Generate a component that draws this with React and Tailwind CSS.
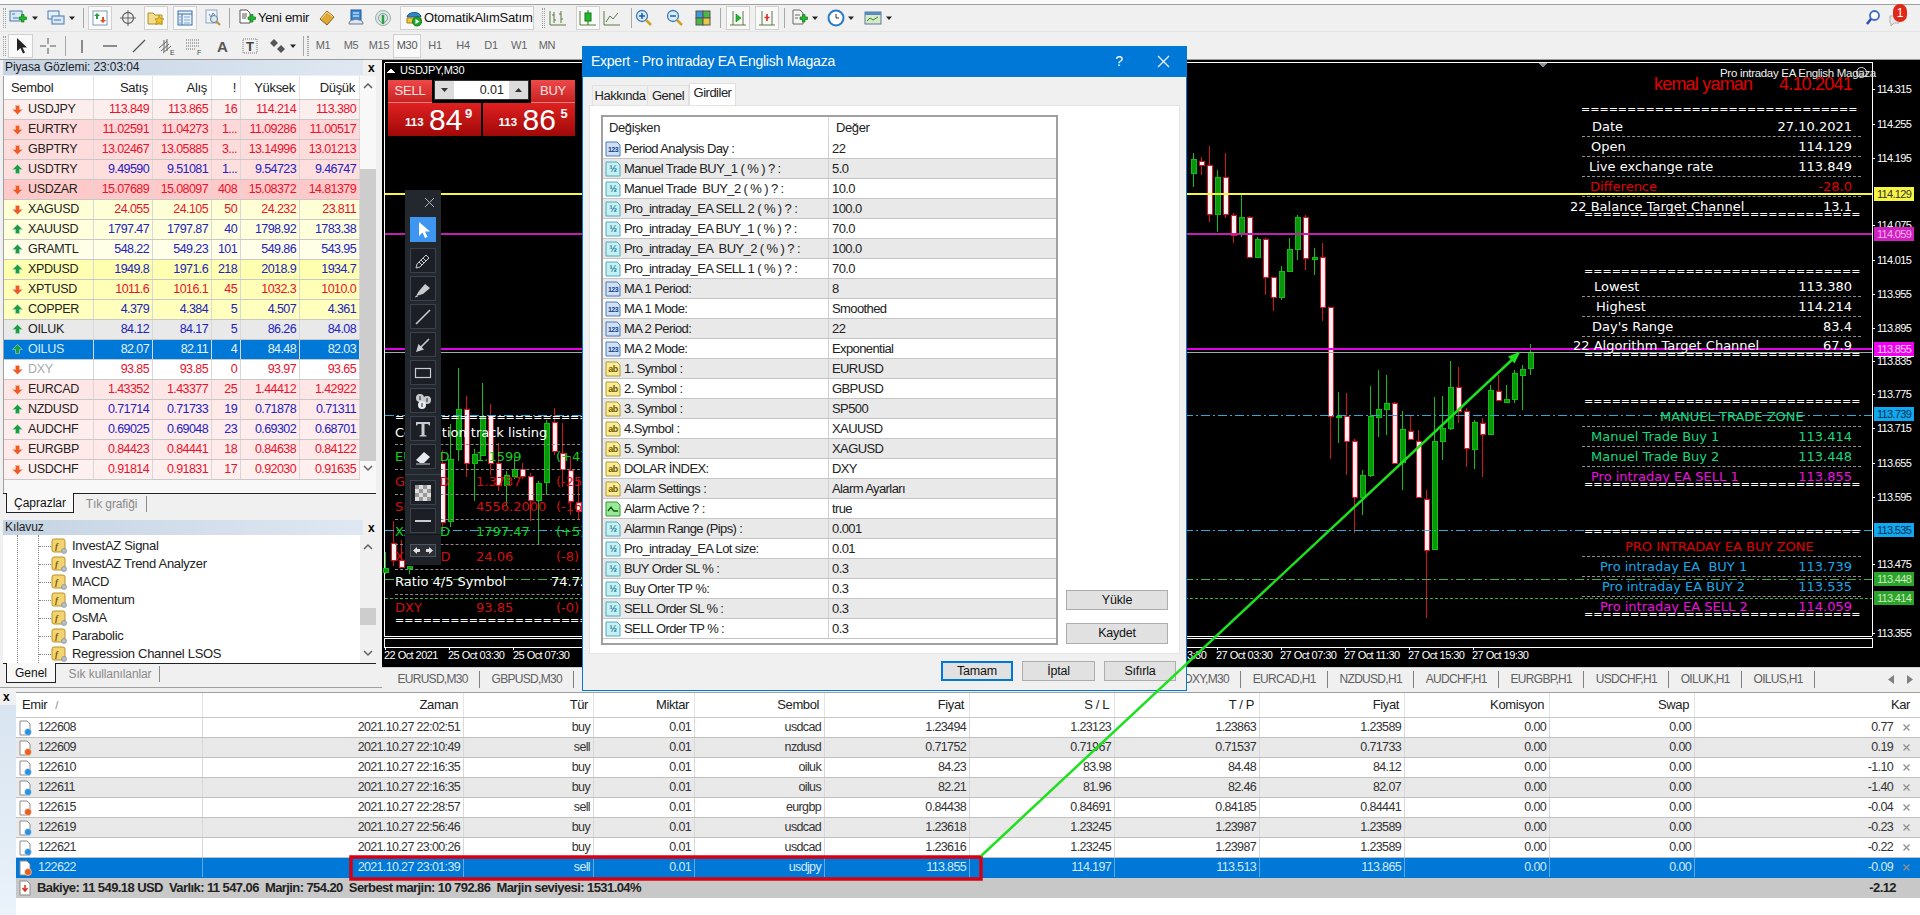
import React from 'react';

// ── data ──
const WATCH = [
  ['USDJPY', '113.849', '113.865', '16', '114.214', '113.380', 'd', 'bg-[#fdeeee]'],
  ['EURTRY', '11.02591', '11.04273', '1...', '11.09286', '11.00517', 'd', 'bg-[#ffd9d9]'],
  ['GBPTRY', '13.02467', '13.05885', '3...', '13.14996', '13.01213', 'd', 'bg-[#ffdcdc]'],
  ['USDTRY', '9.49590', '9.51081', '1...', '9.54723', '9.46747', 'u', 'bg-[#ffdede]'],
  ['USDZAR', '15.07689', '15.08097', '408', '15.08372', '14.81379', 'd', 'bg-[#ffc9c9]'],
  ['XAGUSD', '24.055', '24.105', '50', '24.232', '23.811', 'd', 'bg-[#ffffd6]'],
  ['XAUUSD', '1797.47', '1797.87', '40', '1798.92', '1783.38', 'u', 'bg-[#ffffdb]'],
  ['GRAMTL', '548.22', '549.23', '101', '549.86', '543.95', 'u', 'bg-[#ffffe8]'],
  ['XPDUSD', '1949.8', '1971.6', '218', '2018.9', '1934.7', 'u', 'bg-[#ffffb0]'],
  ['XPTUSD', '1011.6', '1016.1', '45', '1032.3', '1010.0', 'd', 'bg-[#ffffb8]'],
  ['COPPER', '4.379', '4.384', '5', '4.507', '4.361', 'u', 'bg-[#ffffbe]'],
  ['OILUK', '84.12', '84.17', '5', '86.26', '84.08', 'u', 'bg-[#e9e9e9]'],
  ['OILUS', '82.07', '82.11', '4', '84.48', '82.03', 'u', 'bg-[#0078d7]'],
  ['DXY', '93.85', '93.85', '0', '93.97', '93.65', 'd', 'bg-white'],
  ['EURCAD', '1.43352', '1.43377', '25', '1.44412', '1.42922', 'd', 'bg-[#ffe6e6]'],
  ['NZDUSD', '0.71714', '0.71733', '19', '0.71878', '0.71311', 'u', 'bg-[#ffe9e9]'],
  ['AUDCHF', '0.69025', '0.69048', '23', '0.69302', '0.68701', 'u', 'bg-[#ffecec]'],
  ['EURGBP', '0.84423', '0.84441', '18', '0.84638', '0.84122', 'd', 'bg-[#ffe9e9]'],
  ['USDCHF', '0.91814', '0.91831', '17', '0.92030', '0.91635', 'd', 'bg-[#fff0f0]'],
];

const GUIDE = ['InvestAZ Signal', 'InvestAZ Trend Analyzer', 'MACD', 'Momentum', 'OsMA', 'Parabolic', 'Regression Channel LSOS'];

const INPUTS = [
  ['n', 'Period Analysis Day :', '22'],
  ['d', 'Manuel Trade BUY_1 ( % ) ? :', '5.0'],
  ['d', 'Manuel Trade  BUY_2 ( % ) ? :', '10.0'],
  ['d', 'Pro_intraday_EA SELL 2 ( % ) ? :', '100.0'],
  ['d', 'Pro_intraday_EA BUY_1 ( % ) ? :', '70.0'],
  ['d', 'Pro_intraday_EA  BUY_2 ( % ) ? :', '100.0'],
  ['d', 'Pro_intraday_EA SELL 1 ( % ) ? :', '70.0'],
  ['n', 'MA 1 Period:', '8'],
  ['n', 'MA 1 Mode:', 'Smoothed'],
  ['n', 'MA 2 Period:', '22'],
  ['n', 'MA 2 Mode:', 'Exponential'],
  ['s', '1. Symbol :', 'EURUSD'],
  ['s', '2. Symbol :', 'GBPUSD'],
  ['s', '3. Symbol :', 'SP500'],
  ['s', '4.Symbol :', 'XAUUSD'],
  ['s', '5. Symbol:', 'XAGUSD'],
  ['s', 'DOLAR İNDEX:', 'DXY'],
  ['s', 'Alarm Settings :', 'Alarm Ayarları'],
  ['b', 'Alarm Active ? :', 'true'],
  ['d', 'Alarmın Range (Pips) :', '0.001'],
  ['d', 'Pro_intraday_EA Lot size:', '0.01'],
  ['d', 'BUY Order SL % :', '0.3'],
  ['d', 'Buy Orter TP %:', '0.3'],
  ['d', 'SELL Order SL % :', '0.3'],
  ['d', 'SELL Order TP % :', '0.3'],
];

const TRADES = [
  ['122608', '2021.10.27 22:02:51', 'buy', '0.01', 'usdcad', '1.23494', '1.23123', '1.23863', '1.23589', '0.00', '0.00', '0.77'],
  ['122609', '2021.10.27 22:10:49', 'sell', '0.01', 'nzdusd', '0.71752', '0.71967', '0.71537', '0.71733', '0.00', '0.00', '0.19'],
  ['122610', '2021.10.27 22:16:35', 'buy', '0.01', 'oiluk', '84.23', '83.98', '84.48', '84.12', '0.00', '0.00', '-1.10'],
  ['122611', '2021.10.27 22:16:35', 'buy', '0.01', 'oilus', '82.21', '81.96', '82.46', '82.07', '0.00', '0.00', '-1.40'],
  ['122615', '2021.10.27 22:28:57', 'sell', '0.01', 'eurgbp', '0.84438', '0.84691', '0.84185', '0.84441', '0.00', '0.00', '-0.04'],
  ['122619', '2021.10.27 22:56:46', 'buy', '0.01', 'usdcad', '1.23618', '1.23245', '1.23987', '1.23589', '0.00', '0.00', '-0.23'],
  ['122621', '2021.10.27 23:00:26', 'buy', '0.01', 'usdcad', '1.23616', '1.23245', '1.23987', '1.23589', '0.00', '0.00', '-0.22'],
  ['122622', '2021.10.27 23:01:39', 'sell', '0.01', 'usdjpy', '113.855', '114.197', '113.513', '113.865', '0.00', '0.00', '-0.09'],
];

// candles: [high, low, bodyTop, bodyBottom, up]
const RIGHT_CANDLES = [
  [153, 187, 159, 173, 1], [157, 175, 161, 165, 0], [146, 222, 165, 214, 0], [170, 232, 177, 214, 1],
  [153, 218, 177, 214, 0], [213, 243, 215, 235, 0], [194, 237, 217, 234, 1], [216, 257, 217, 257, 0],
  [237, 257, 239, 257, 1], [238, 295, 239, 277, 0], [277, 311, 277, 297, 0], [266, 300, 271, 297, 1],
  [238, 272, 249, 271, 1], [215, 260, 217, 249, 1], [215, 270, 217, 258, 0], [248, 275, 257, 259, 1],
  [243, 321, 257, 307, 0], [307, 459, 307, 416, 0], [392, 443, 416, 417, 1], [393, 475, 416, 441, 0],
  [439, 533, 441, 497, 0], [470, 515, 475, 497, 1], [386, 477, 416, 475, 1], [370, 437, 409, 417, 1],
  [375, 435, 403, 409, 1], [402, 463, 403, 463, 0], [411, 490, 429, 462, 1], [416, 440, 431, 439, 0],
  [430, 498, 441, 497, 0], [490, 618, 499, 550, 0], [397, 550, 441, 549, 1], [396, 460, 428, 441, 1],
  [361, 430, 387, 428, 1], [367, 423, 387, 411, 0], [408, 467, 411, 448, 0], [420, 469, 422, 449, 1],
  [418, 477, 423, 434, 0], [385, 435, 390, 434, 1], [375, 401, 391, 400, 0], [385, 403, 399, 402, 1],
  [370, 403, 373, 399, 1], [365, 410, 369, 375, 1], [344, 375, 352, 368, 1],
];

// x, high, low, bodyTop, bodyBottom, up
const LEFT_CANDLES = [
  [385, 552, 574, 568, 572, 1], [393, 521, 566, 543, 560, 0], [401, 540, 568, 560, 567, 0], [409, 566, 574, 566, 568, 1],
  [442, 450, 530, 463, 522, 0], [450, 424, 527, 459, 521, 1], [458, 368, 461, 409, 449, 1], [466, 396, 477, 409, 463, 0],
  [474, 449, 501, 454, 463, 1], [482, 383, 455, 416, 455, 1], [490, 404, 475, 416, 463, 0], [498, 443, 491, 463, 485, 0],
  [506, 471, 505, 475, 485, 1], [514, 457, 479, 469, 476, 1], [522, 463, 479, 469, 476, 0], [530, 473, 521, 476, 500, 0],
  [538, 481, 544, 483, 500, 1], [546, 420, 495, 423, 482, 1], [554, 408, 455, 422, 451, 0], [562, 423, 487, 453, 469, 0],
  [570, 457, 515, 470, 501, 0], [578, 479, 519, 502, 511, 0],
];

const AXIS = [
  ['114.315', 89], ['114.255', 124], ['114.195', 158], ['114.075', 225], ['114.015', 260], ['113.955', 294],
  ['113.895', 328], ['113.835', 361], ['113.775', 394], ['113.715', 428], ['113.655', 463], ['113.595', 497],
  ['113.475', 564], ['113.355', 633],
];

const TAGS = [
  ['114.129', 194, 'bg-[#f5f542] text-[#333]'],
  ['114.059', 234, 'bg-[#d020c0] text-[#f8b0f0]'],
  ['113.849', 350, 'bg-white text-black'],
  ['113.855', 349, 'bg-[#f000f0] text-[#fdd0fd]'],
  ['113.739', 414, 'bg-[#10a8f0] text-[#053050]'],
  ['113.535', 530, 'bg-[#10a8f0] text-[#053050]'],
  ['113.448', 579, 'bg-[#2aa52a] text-[#cfe8c0]'],
  ['113.414', 598, 'bg-[#2aa52a] text-[#cfe8c0]'],
];

const TIMES = [
  ['22 Oct 2021', 384], ['25 Oct 03:30', 448], ['25 Oct 07:30', 513], ['3:30', 1187],
  ['27 Oct 03:30', 1216], ['27 Oct 07:30', 1280], ['27 Oct 11:30', 1344], ['27 Oct 15:30', 1408], ['27 Oct 19:30', 1472],
];

const W = 'text-white';
const R = 'text-[#e00000]';
const P = 'text-[#f010e0]';
const T = 'text-[#18d880]';
const B = 'text-[#18a8e8]';
const PANEL = [
  ['Date', 1592, 127, '27.10.2021', W], ['Open', 1591, 147, '114.129', W], ['Live exchange rate', 1589, 167, '113.849', W],
  ['Difference', 1590, 187, '-28.0', R], ['22 Balance Target Channel', 1570, 207, '13.1', W],
  ['Lowest', 1594, 287, '113.380', W], ['Highest', 1596, 307, '114.214', W], ["Day's Range", 1592, 327, '83.4', W],
  ['22 Algorithm Target Channel', 1573, 346, '67.9', W],
  ['MANUEL TRADE ZONE', 1660, 417, '', T], ['Manuel Trade Buy 1', 1591, 437, '113.414', T], ['Manuel Trade Buy 2', 1591, 457, '113.448', T],
  ['Pro intraday EA SELL 1', 1591, 477, '113.855', P],
  ['PRO INTRADAY EA BUY ZONE', 1625, 547, '', R], ['Pro intraday EA  BUY 1', 1600, 567, '113.739', B],
  ['Pro intraday EA BUY 2', 1602, 587, '113.535', B], ['Pro intraday EA SELL 2', 1600, 607, '114.059', P],
];
const EQUALS_R = [[1581, 110], [1584, 215], [1584, 272], [1584, 355], [1584, 402], [1584, 485], [1584, 532], [1584, 615]];
const DASHES_R = [136, 156, 176, 196, 296, 316, 336, 426, 446, 466, 556, 576, 596];
const DASHES_L = [444, 469, 494, 519, 544, 569, 594];
const G = 'text-[#10d020]';
const D = 'text-[#d01010]';
const CORR = [
  ['Correlation track listing', 433, '', '', W], ['EURUSD', 457, '1.1599', '(+4)', G], ['GBPUSD', 482, '1.3737', '(-25)', D],
  ['SP500', 507, '4556.2000', '(-16)', D], ['XAUUSD', 532, '1797.47', '(+5)', G], ['XAGUSD', 557, '24.06', '(-8)', D],
  ['DXY', 608, '93.85', '(-0)', D],
];

// ── small icons ──
const Svg = ({ children, className = '', size = 18 }) => (
  <svg width={size} height={size} viewBox="0 0 18 18" className={`shrink-0 ${className}`}>{children}</svg>
);

const Plus = () => <path d="M10 8h2.5V5.5h2.5V8H17.500v2.500H15V13h-2.500v-2.500H10z" fill="#22b82c" stroke="#0c7a14" strokeWidth="0.7" />;

function TbIcon({ name, className }) {
  const body = {
    chart: <><rect x="1" y="2" width="12" height="10" fill="#d9e8f7" stroke="#4a7ba8" /><path d="M3 5h3M4 9h5" stroke="#4a7ba8" /><Plus /></>,
    profiles: <><rect x="1" y="2" width="11" height="8" fill="#e6f0fa" stroke="#4a7ba8" /><rect x="5" y="7" width="12" height="8" fill="#d9e8f7" stroke="#4a7ba8" /><path d="M7 11h7" stroke="#4a7ba8" /></>,
    watch: <><rect x="2" y="2" width="14" height="14" fill="#fff" stroke="#7a9cbc" /><path d="M6 4 9 7H7v3H5V7H3z" fill="#20a040" /><path d="M12 14 9 11h2V8h2v3h2z" fill="#e05020" /></>,
    nav: <><circle cx="9" cy="9" r="5.500" fill="none" stroke="#666" strokeWidth="1.300" /><path d="M9 1v16M1 9h16" stroke="#666" /></>,
    fav: <><path d="M1 4h5l2 2h7v9H1z" fill="#f3dc8c" stroke="#b09030" /><path d="m12 6 1.600 3.400 3.400.400-2.500 2.400.700 3.500-3.200-1.800-3.200 1.800.700-3.500L8 9.800l3.400-.400z" fill="#f0c020" stroke="#a08010" strokeWidth="0.600" /></>,
    term: <><rect x="2" y="2" width="14" height="14" fill="#e8f2fc" stroke="#3a6ea5" /><path d="M2 5h14M6 5v11" stroke="#3a6ea5" /><path d="M8 8h6M8 11h6M8 14h6M3 8h2M3 11h2M3 14h2" stroke="#7aa5d0" /></>,
    tester: <><rect x="2" y="1" width="11" height="13" fill="#eef4fa" stroke="#8fa5bc" /><path d="M5 5l2 3 2-4 2 2" stroke="#5a8ab8" fill="none" /><circle cx="10" cy="10" r="3.500" fill="#dbeaf7" stroke="#6a7a8a" /><path d="m12.500 12.500 3.500 3.500" stroke="#c09030" strokeWidth="2" /></>,
    order: <><path d="M2 1h7l3 3v10H2z" fill="#fff" stroke="#555" /><path d="M4 5h5M4 7h5M4 9h4" stroke="#555" /><Plus /></>,
    editor: <><path d="M9 2 16 8 9 16 2 10z" fill="#e0a838" stroke="#8a6210" /><path d="M3 10l6-7 6 5" fill="none" stroke="#f8e09a" /></>,
    user: <><rect x="4" y="1" width="10" height="10" fill="#3a8ad8" stroke="#1a5a98" /><path d="M6 4h6M6 7h6" stroke="#fff" /><path d="M2 15c0-3 2-4 4-4 1-1 5-1 6 0 2 0 4 1 4 4z" fill="#dbe6f2" stroke="#6a7a8a" /></>,
    signal: <><circle cx="9" cy="9" r="7.500" fill="#dce6e4" stroke="#9ab0b0" /><circle cx="9" cy="9" r="4.500" fill="none" stroke="#8aa0a0" /><path d="M9 6v9" stroke="#2ea040" strokeWidth="2.500" /></>,
    auto: <><path d="M2 8c0-5 13-7 14 0z" fill="#2f86c8" stroke="#1a5a90" /><path d="M2 9h14v5H2z" fill="#f0c840" stroke="#a08010" /><circle cx="12" cy="12.500" r="4.500" fill="#22a830" stroke="#0c7a14" /><path d="m10.500 10 4 2.500-4 2.500z" fill="#fff" /></>,
    bars: <path d="M5 3v11M3 6h2M5 11h2M12 2v12M10 5h2M12 10h2M1 16h16M1 2v14" stroke="#5a7a3a" fill="none" />,
    candle: <><path d="M9 1v15" stroke="#1a7a1a" /><rect x="6" y="4" width="6" height="8" fill="#22b82c" stroke="#0c7a14" /><path d="M1 16h16M1 2v14" stroke="#5a7a3a" /></>,
    line: <path d="M1 2v14h16M3 13l4-6 3 3 5-6" stroke="#5a7a3a" fill="none" />,
    zoomIn: <><circle cx="7" cy="7" r="5.500" fill="#d9ecfb" stroke="#3a7ab8" strokeWidth="1.300" /><path d="M4 7h6M7 4v6" stroke="#1a5aa8" strokeWidth="1.500" /><path d="m11 11 5 5" stroke="#d0a020" strokeWidth="2.500" /></>,
    zoomOut: <><circle cx="7" cy="7" r="5.500" fill="#d9ecfb" stroke="#3a7ab8" strokeWidth="1.300" /><path d="M4 7h6" stroke="#1a5aa8" strokeWidth="1.500" /><path d="m11 11 5 5" stroke="#d0a020" strokeWidth="2.500" /></>,
    tile: <><rect x="2" y="2" width="7" height="7" fill="#3a9ad8" stroke="#555" /><rect x="9" y="2" width="7" height="7" fill="#4ab848" stroke="#555" /><rect x="2" y="9" width="7" height="7" fill="#4ab848" stroke="#555" /><rect x="9" y="9" width="7" height="7" fill="#e8c848" stroke="#555" /></>,
    shift: <><path d="M1 16h16M4 2v14M14 2v14" stroke="#5a7a3a" /><path d="M7 5l5 4-5 4z" fill="#22b82c" stroke="#0c7a14" strokeWidth="0.600" /></>,
    scroll: <><path d="M1 16h16M4 2v14M14 2v14" stroke="#5a7a3a" /><path d="M9 5v7M6.500 8.500h5" stroke="#d03020" strokeWidth="1.600" /></>,
    ind: <><path d="M3 1h7l3 3v11H3z" fill="#f4f4f4" stroke="#666" /><path d="M5 6h5M5 9h3" stroke="#666" /><Plus /></>,
    clock: <><circle cx="9" cy="9" r="7.500" fill="#fff" stroke="#2a7ac8" strokeWidth="2" /><path d="M9 5v4h3" stroke="#333" fill="none" /></>,
    tmpl: <><rect x="1" y="3" width="16" height="12" fill="#d8e8c8" stroke="#5a7a9a" /><rect x="1" y="3" width="16" height="3" fill="#5a8ac0" /><path d="M3 12l3-3 3 2 5-3" stroke="#2a8a2a" fill="none" /></>,
    cursor: <path d="M5 1v13l3.500-3 2.500 5.500 2-1-2.500-5H15z" fill="#222" />,
    cross: <path d="M9 1v6M9 11v6M1 9h6M11 9h6" stroke="#555" />,
    vert: <path d="M9 3v13" stroke="#555" strokeWidth="1.300" />,
    horiz: <path d="M2 9h14" stroke="#555" strokeWidth="1.300" />,
    trend: <path d="m3 15 12-12" stroke="#555" strokeWidth="1.200" />,
    channel: <><path d="m1 11 8-7M3 14l8-7M5 16l8-7M6 3v12M9 2v12" stroke="#666" /><text x="12" y="18" fontSize="7" fill="#444" fontFamily="Liberation Sans">E</text></>,
    fib: <><path d="M1 3h13M1 6h13M1 9h13M1 12h9" stroke="#666" strokeDasharray="1 1" /><text x="12" y="18" fontSize="7" fill="#444" fontFamily="Liberation Sans">F</text></>,
    a: <text x="4" y="15" fontSize="15" fill="#555" fontWeight="700" fontFamily="Liberation Sans">A</text>,
    t: <><rect x="2" y="2" width="14" height="14" fill="none" stroke="#777" strokeDasharray="1 1" /><text x="5" y="14" fontSize="13" fill="#444" fontWeight="700" fontFamily="Liberation Sans">T</text></>,
    shapes: <path d="M5 2 9 6 5 10 1 6zM12 8l4 4-4 4-4-4z" fill="#555" />,
    search: <><circle cx="10.500" cy="6.500" r="4.500" fill="#fff" stroke="#3a6ac8" strokeWidth="1.800" /><path d="m7 10-4 5" stroke="#2a4ab8" strokeWidth="2.500" /></>,
  }[name];
  return <Svg className={className}>{body}</Svg>;
}

const Drop = ({ className = '' }) => (
  <svg width="8" height="8" viewBox="0 0 8 8" className={`shrink-0 ${className}`}><path d="M1 2.500h6L4 6z" fill="#222" /></svg>
);
const Sep = ({ className = '' }) => <div className={`w-px h-[20px] bg-[#a8a8a8] shrink-0 ${className}`} />;
const Grip = ({ className = '' }) => (
  <div className={`w-[3px] h-[20px] shrink-0 border-x border-dotted border-[#a0a0a0] ${className}`} />
);
const Pressed = ({ className = '', w = 'w-[24px]', children }) => (
  <div className={`h-[24px] ${w} shrink-0 flex items-center justify-center bg-[#f9f9f9] border border-[#d0d0d0] ${className}`}>{children}</div>
);
const Plain = ({ className = '', children }) => (
  <div className={`h-[24px] w-[24px] shrink-0 flex items-center justify-center ${className}`}>{children}</div>
);

function Toolbars() {
  const frames = ['M1', 'M5', 'M15', 'M30', 'H1', 'H4', 'D1', 'W1', 'MN'];
  return (
    <div className="shrink-0 bg-[#f0f0f0]">
      <div className="h-[4px] bg-[#fafafa]" />
      <div className="h-px bg-[#a0a0a0]" />
      <div className="h-[26px] flex items-center">
        <Grip className="ml-[3px]" />
        <TbIcon name="chart" className="ml-[3px]" />
        <Drop className="ml-[4px]" />
        <TbIcon name="profiles" className="ml-[8px]" />
        <Drop className="ml-[3px]" />
        <Sep className="ml-[7px]" />
        <Pressed className="ml-[4px]"><TbIcon name="watch" /></Pressed>
        <Plain className="ml-[4px]"><TbIcon name="nav" /></Plain>
        <Pressed className="ml-[4px]"><TbIcon name="fav" /></Pressed>
        <Pressed className="ml-[5px]"><TbIcon name="term" /></Pressed>
        <Plain className="ml-[4px]"><TbIcon name="tester" /></Plain>
        <Sep className="ml-[4px]" />
        <TbIcon name="order" className="ml-[8px]" />
        <span className="ml-[2px] w-[50px] text-[13px] tracking-[-0.3px] text-[#111] whitespace-nowrap">Yeni emir</span>
        <TbIcon name="editor" className="ml-[10px]" />
        <TbIcon name="user" className="ml-[11px]" />
        <TbIcon name="signal" className="ml-[9px]" />
        <Pressed className="ml-[8px] !justify-start pl-[4px]" w="w-[134px]">
          <TbIcon name="auto" />
          <span className="ml-[1px] text-[13px] tracking-[-0.2px] text-[#111] whitespace-nowrap">OtomatikAlımSatım</span>
        </Pressed>
        <Grip className="ml-[8px]" />
        <TbIcon name="bars" className="ml-[4px]" />
        <Pressed className="ml-[9px]"><TbIcon name="candle" /></Pressed>
        <TbIcon name="line" className="ml-[3px]" />
        <Sep className="ml-[10px]" />
        <TbIcon name="zoomIn" className="ml-[3px]" />
        <TbIcon name="zoomOut" className="ml-[13px]" />
        <TbIcon name="tile" className="ml-[10px]" />
        <Sep className="ml-[8px]" />
        <Pressed className="ml-[5px]"><TbIcon name="shift" /></Pressed>
        <Pressed className="ml-[5px]"><TbIcon name="scroll" /></Pressed>
        <Sep className="ml-[5px]" />
        <TbIcon name="ind" className="ml-[5px]" />
        <Drop className="ml-[3px]" />
        <TbIcon name="clock" className="ml-[8px]" />
        <Drop className="ml-[2px]" />
        <TbIcon name="tmpl" className="ml-[9px]" />
        <Drop className="ml-[3px]" />
        <TbIcon name="search" className="ml-auto" />
        <div className="relative ml-[6px] mr-[14px] w-[18px] h-[18px]">
          <svg width="14" height="14" viewBox="0 0 14 14" className="absolute left-0 top-[5px]"><path d="M2 2h9v7H6l-3 3V9H2z" fill="#e8e8e8" stroke="#b0b0b0" /></svg>
          <span className="absolute left-[5px] top-[-5px] w-[14px] h-[18px] rounded-full bg-[#e02818] text-white text-[12px] leading-[18px] text-center">1</span>
        </div>
      </div>
      <div className="h-[29px] flex items-center border-b border-[#9a9a9a] border-t-[#e4e4e4] border-t">
        <Grip className="ml-[3px]" />
        <Pressed className="ml-[2px]" w="w-[25px]"><TbIcon name="cursor" /></Pressed>
        <TbIcon name="cross" className="ml-[6px]" />
        <Sep className="ml-[8px]" />
        <TbIcon name="vert" className="ml-[7px]" />
        <TbIcon name="horiz" className="ml-[10px]" />
        <TbIcon name="trend" className="ml-[11px]" />
        <TbIcon name="channel" className="ml-[10px]" />
        <TbIcon name="fib" className="ml-[9px]" />
        <TbIcon name="a" className="ml-[10px]" />
        <TbIcon name="t" className="ml-[10px]" />
        <TbIcon name="shapes" className="ml-[10px]" />
        <Drop className="ml-[2px]" />
        <Sep className="ml-[6px]" />
        <Grip className="ml-[3px] !w-[2px]" />
        {frames.map((f) =>
          f === 'M30' ? (
            <Pressed key={f} w="w-[28px]" className="text-[11px] tracking-[-0.3px] text-[#555]">{f}</Pressed>
          ) : (
            <span key={f} className="w-[28px] text-center text-[11px] tracking-[-0.3px] text-[#666] shrink-0">{f}</span>
          ),
        )}
      </div>
    </div>
  );
}

const Dir = ({ down }) => (
  <svg width="11" height="11" viewBox="0 0 11 11" className="shrink-0">
    {down ? (
      <path d="M5.500 10.500 10.500 5.500H7.500V1.500H3.500V5.500H.5z" fill="#ee5a28" stroke="#f8c0a0" strokeWidth="0.600" />
    ) : (
      <path d="M5.500.5 10.500 5.500H7.500V9.500H3.500V5.500H.5z" fill="#1f9a48" stroke="#a0e0b0" strokeWidth="0.600" />
    )}
  </svg>
);

const ScrollBtn = ({ up }) => (
  <svg width="10" height="7" viewBox="0 0 10 7"><path d={up ? 'M1 6 5 2l4 4' : 'M1 1l4 4 4-4'} fill="none" stroke="#606060" strokeWidth="1.500" /></svg>
);

const PanelTitle = ({ children }) => (
  <div className="h-[15px] flex items-center shrink-0">
    <div className="w-[360px] ml-[3px] h-[15px] bg-gradient-to-r from-[#c5d3e2] to-[#dfe8f2] text-[12px] leading-[15px] pl-[2px] tracking-[-0.1px] text-[#222]">{children}</div>
    <span className="ml-[5px] text-[12px] font-bold leading-none">x</span>
  </div>
);

function BottomTabs({ active, other, activeW, otherW }) {
  return (
    <div className="h-[20px] ml-[3px] w-[373px] border-t border-[#222] flex text-[12px] shrink-0">
      <div className={`${activeW} ml-[3px] h-[20px] -mt-px bg-[#f8f8f8] border-x border-b border-[#222] flex items-center justify-center text-[#111]`}>{active}</div>
      <div className={`${otherW} text-[#8a8a8a] flex items-center justify-center border-r border-[#8a8a8a] h-[16px] mt-[2px] tracking-[-0.1px]`}>{other}</div>
    </div>
  );
}

function LeftPanel() {
  return (
    <div className="w-[382px] shrink-0 flex flex-col h-[630px] bg-[#f0f0f0] text-[12px]">
      <PanelTitle>Piyasa Gözlemi: 23:03:04</PanelTitle>
      <div className="h-px shrink-0" />
      <div className="ml-[3px] w-[373px] h-[417px] flex bg-[#f8f8f8] border-l border-[#a0a0a0] shrink-0">
        <div className="w-[356px]">
          <div className="grid grid-cols-[90px_59px_59px_29px_59px_60px] h-[24px] bg-white text-[13px] tracking-[-0.3px] text-[#222] border-b border-[#c8c8c8]">
            <div className="pl-[7px] flex items-center border-r border-[#e4e4e4]">Sembol</div>
            {['Satış', 'Alış', '!', 'Yüksek', 'Düşük'].map((h) => (
              <div key={h} className="flex items-center justify-end pr-[4px] border-r border-[#e4e4e4]">{h}</div>
            ))}
          </div>
          {WATCH.map(([name, bid, ask, spr, hi, lo, dir, bg]) => {
            const selected = name === 'OILUS';
            const tone = selected ? 'text-[#e8f4ff]' : dir === 'd' ? 'text-[#e8122c]' : 'text-[#2222c0]';
            return (
              <div key={name} className={`grid grid-cols-[90px_59px_59px_29px_59px_60px] h-[20px] border-b border-[#c8c8c8] text-[12.500px] tracking-[-0.6px] ${bg}`}>
                <div className="flex items-center pl-[8px] gap-[5px] border-r border-[#d8d8d8]">
                  <Dir down={dir === 'd'} />
                  <span className={`tracking-[-0.3px] ${selected ? 'text-[#d8ecff]' : name === 'DXY' ? 'text-[#aaa]' : 'text-[#222]'}`}>{name}</span>
                </div>
                {[bid, ask, spr, hi, lo].map((v, i) => (
                  <div key={i} className={`flex items-center justify-end pr-[3px] border-r border-[#d8d8d8] ${tone}`}>{v}</div>
                ))}
              </div>
            );
          })}
        </div>
        <div className="flex-1 flex flex-col items-center pt-[6px]">
          <ScrollBtn up />
          <div className="w-[16px] h-[292px] mt-[80px] bg-[#cdcdcd]" />
          <div className="mt-[4px]"><ScrollBtn /></div>
        </div>
      </div>
      <BottomTabs active="Çaprazlar" other="Tık grafiği" activeW="w-[68px]" otherW="w-[72px] ml-[1px] pl-[2px]" />
      <div className="h-[7px] shrink-0" />
      <PanelTitle>Kılavuz</PanelTitle>
      <div className="ml-[3px] w-[373px] h-[128px] bg-white flex shrink-0 text-[13px] tracking-[-0.3px] text-[#222]">
        <div className="relative w-[357px] pt-[2px]">
          <div className="absolute left-[14px] top-0 bottom-0 border-l border-dotted border-[#888]" />
          <div className="absolute left-[35px] top-0 bottom-0 border-l border-dotted border-[#888]" />
          {GUIDE.map((g) => (
            <div key={g} className="h-[18px] flex items-center">
              <div className="w-[12px] ml-[36px] border-t border-dotted border-[#888]" />
              <svg width="16" height="16" viewBox="0 0 16 16" className="shrink-0">
                <rect x="1" y="1" width="13" height="13" rx="2" fill="#f3d470" stroke="#b89428" />
                <text x="4" y="11" fontSize="9" fontStyle="italic" fontWeight="700" fill="#7a5a10" fontFamily="Liberation Serif">f</text>
                <circle cx="13" cy="13" r="2.500" fill="#b8c0c8" stroke="#708090" strokeWidth="0.600" />
              </svg>
              <span className="ml-[5px] whitespace-nowrap">{g}</span>
            </div>
          ))}
        </div>
        <div className="flex-1 bg-[#f0f0f0] flex flex-col items-center pt-[8px]">
          <ScrollBtn up />
          <div className="w-[16px] h-[17px] mt-[58px] bg-[#cdcdcd]" />
          <div className="mt-[25px]"><ScrollBtn /></div>
        </div>
      </div>
      <BottomTabs active="Genel" other="Sık kullanılanlar" activeW="w-[50px]" otherW="w-[103px] ml-[1px] pl-[4px]" />
      <div className="h-[5px] shrink-0 border-b border-[#a0a0a0]" />
    </div>
  );
}

function Candle({ x, hi, lo, top, bot, up }) {
  const c = up ? '#10c010' : '#d01818';
  return (
    <g>
      <path d={`M${x} ${hi}V${lo}`} stroke={c} />
      <rect x={x - 2.5} y={top + 0.5} width="5" height={Math.max(bot - top, 1)} fill={up ? '#0a960a' : '#fff0f2'} stroke={up ? '#10c010' : '#e01028'} />
    </g>
  );
}

function ChartDrawing() {
  return (
    <svg width="1538" height="607" viewBox="382 60 1538 607" className="absolute left-0 top-0" shapeRendering="crispEdges">
      <path d="M384.500 62.500H1872.500V636M384 62.500V636" fill="none" stroke="#fff" />
      <path d="M384 636H1872M384 638H1872M384 638V647H1872V638" fill="none" stroke="#fff" />
      {RIGHT_CANDLES.map(([hi, lo, top, bot, up], i) => (
        <Candle key={i} x={Math.round(1193.2 + 8.02 * i) + 0.5} hi={hi} lo={lo} top={top} bot={bot} up={up} />
      ))}
      {LEFT_CANDLES.map(([x, hi, lo, top, bot, up]) => (
        <Candle key={x} x={x + 0.5} hi={hi} lo={lo} top={top} bot={bot} up={up} />
      ))}
      <path d="M385 194H1872" stroke="#f5f542" strokeWidth="2" />
      <path d="M385 234H1872" stroke="#c020b0" strokeWidth="2" />
      <path d="M385 349H1872" stroke="#e400e4" strokeWidth="2" />
      <path d="M385 352.500H1872" stroke="#9ab0b0" />
      <path d="M385 415.500H1872M385 530.500H1872" stroke="#30a8d8" strokeDasharray="9 3 2 3" />
      <path d="M385 579.500H1872" stroke="#40b040" strokeDasharray="9 3 2 3" />
      <path d="M385 598.500H1872" stroke="#40b040" strokeDasharray="3 2" />
      {[385, 449, 513, 1217, 1281, 1345, 1409, 1473].map((x) => (
        <path key={x} d={`M${x + 0.5} 647v3`} stroke="#fff" />
      ))}
      {AXIS.map(([, y]) => <path key={y} d={`M1872 ${y + 0.5}h3`} stroke="#fff" />)}
      <path d="M386.500 73 391 68l4.500 5z" fill="#fff" />
      <path d="M1539 63h8l-4 5z" fill="#8a8f98" />
    </svg>
  );
}

function OneClick() {
  const Price = ({ big, sup, small, bigL, supL }) => (
    <div className="h-[33px] flex-1 bg-gradient-to-b from-[#e02020] to-[#a00808] text-white relative">
      <span className={`text-[11.500px] font-bold absolute bottom-[5px] ${small}`}>113</span>
      <span className={`text-[30px] leading-[33px] absolute top-0 ${bigL}`}>{big}</span>
      <span className={`text-[13px] font-bold leading-none absolute top-[4px] ${supL}`}>{sup}</span>
    </div>
  );
  return (
    <div className="absolute left-[388px] top-[80px] w-[187px] font-['Liberation_Sans',sans-serif]">
      <div className="flex items-start h-[23px]">
        <div className="w-[44px] h-[23px] bg-gradient-to-b from-[#ee4848] to-[#c82020] border-b border-[#f08080] text-center text-[#ffe0e0] text-[13px] leading-[21px] tracking-[-0.2px]">SELL</div>
        <div className="ml-[2px] w-[95px] h-[20px] flex items-stretch border border-[#333] text-[12.500px] text-[#222]">
          <div className="w-[19px] bg-[#dcdcdc] flex items-center justify-center"><svg width="7" height="5" viewBox="0 0 7 5"><path d="M0 0h7L3.500 4z" fill="#333" /></svg></div>
          <div className="flex-1 bg-white text-right pr-[5px] leading-[18px]">0.01</div>
          <div className="w-[19px] bg-[#dcdcdc] flex items-center justify-center"><svg width="7" height="5" viewBox="0 0 7 5"><path d="M0 4h7L3.500 0z" fill="#333" /></svg></div>
        </div>
        <div className="ml-[2px] flex-1 h-[23px] bg-gradient-to-b from-[#ee4848] to-[#c82020] border-b border-[#f08080] text-center text-[#ffe0e0] text-[13px] leading-[21px] tracking-[-0.2px]">BUY</div>
      </div>
      <div className="flex gap-[2px]">
        <Price big="84" sup="9" small="left-[17px]" bigL="left-[41px]" supL="left-[77px]" />
        <Price big="86" sup="5" small="left-[16px]" bigL="left-[40px]" supL="left-[78px]" />
      </div>
    </div>
  );
}

function DrawTools() {
  const Btn = ({ active, children, mt = 'mt-[3px]' }) => (
    <div className={`w-[26px] h-[25px] ${mt} flex items-center justify-center border ${active ? 'bg-[#3f96f0] border-[#3f96f0]' : 'bg-[#1c2026] border-[#3c424c]'}`}>
      <svg width="18" height="18" viewBox="0 0 18 18">{children}</svg>
    </div>
  );
  const c = '#c8ccd0';
  return (
    <div className="absolute left-[405px] top-[190px] w-[36px] h-[375px] bg-[#23272e] flex flex-col items-center">
      <div className="w-full h-[24px] relative">
        <svg width="11" height="11" viewBox="0 0 11 11" className="absolute right-[6px] top-[7px]"><path d="m1 1 9 9M10 1l-9 9" stroke="#b0b4b8" /></svg>
      </div>
      <Btn active><path d="M5 1v14l3.500-3.500L11 17l2.500-1.200L11 10.500h5z" fill="#fff" /></Btn>
      <Btn mt="mt-[6px]"><path d="m3 12 9-9 3 3-9 9-4 1zM5 10l3 3M7 8l3 3M9 6l3 3" fill="none" stroke={c} /></Btn>
      <Btn><path d="m2 16 3-5 6-7 5 4-7 6z" fill={c} /><path d="m1 17 3-1" stroke={c} /></Btn>
      <Btn><path d="M2 16 16 2" stroke={c} strokeWidth="1.600" /></Btn>
      <Btn><path d="M15 3 5 13" stroke={c} strokeWidth="1.600" /><path d="m2 16 8-2.500L4.500 8z" fill={c} /></Btn>
      <Btn><rect x="1.500" y="4.500" width="15" height="9" fill="none" stroke={c} strokeWidth="1.200" /></Btn>
      <Btn><circle cx="6" cy="6" r="4" fill={c} /><circle cx="13" cy="8" r="4" fill={c} /><circle cx="8" cy="13" r="4" fill="#e8ecf0" /><path d="M8 11v4M13 6v4M6 4v4" stroke="#222" /></Btn>
      <Btn><path d="M2 2h14v3.500h-1L14 4h-3.500v11l2 .5v1h-7v-1l2-.5V4H4L3 5.500H2z" fill={c} /></Btn>
      <Btn><path d="m2 12 8-8 6 5-6 6H6z" fill="#e8ecf0" /><path d="M2 16h14" stroke={c} /></Btn>
      <div className="w-full h-px mt-[5px] bg-[#3c424c]" />
      <Btn mt="mt-[5px]">
        <rect x="1" y="1" width="16" height="16" fill="#ddd" />
        <path d="M1 1h4v4H1zM9 1h4v4H9zM5 5h4v4H5zM13 5h4v4h-4zM1 9h4v4H1zM9 9h4v4H9zM5 13h4v4H5zM13 13h4v4h-4z" fill="#999" />
      </Btn>
      <Btn mt="mt-[3px]"><path d="M1 9h16" stroke={c} strokeWidth="2" /></Btn>
      <div className="w-full h-px mt-[1px] bg-[#14171b]" />
      <div className="flex-1 w-full bg-[#1e2127] flex items-center justify-center">
        <div className="w-[26px] h-[13px] border border-[#505660] bg-[#2c3036] flex items-center justify-center">
          <svg width="20" height="9" viewBox="0 0 20 9"><path d="M0 4.500 4 1v2h3v3H4v2zM20 4.500 16 1v2h-3v3h3v2z" fill="#e0e0e0" /></svg>
        </div>
      </div>
    </div>
  );
}

function ChartTexts() {
  const font = "font-['DejaVu_Sans',sans-serif] text-[13px] leading-[16px] whitespace-pre absolute";
  return (
    <>
      {PANEL.map(([label, x, y, val, col]) => (
        <React.Fragment key={label}>
          <span className={`${font} ${col}`} style={{ left: x - 382, top: y - 68 }}>{label}</span>
          {val && <span className={`${font} ${col} text-right w-[90px]`} style={{ left: 1852 - 90 - 382, top: y - 68 }}>{val}</span>}
        </React.Fragment>
      ))}
      {EQUALS_R.map(([x, y]) => (
        <span key={y} className="absolute font-['DejaVu_Sans',sans-serif] text-[11px] leading-[12px] text-white whitespace-pre" style={{ left: x - 382, top: y - 66 }}>{'='.repeat(30)}</span>
      ))}
      {DASHES_R.map((y) => (
        <div key={y} className="absolute left-[1200px] w-[279px] border-t border-dashed border-[#909090]" style={{ top: y - 60 }} />
      ))}
      {DASHES_L.map((y) => (
        <div key={y} className="absolute left-[13px] w-[190px] border-t border-dashed border-[#8a8a8a]" style={{ top: y - 60 }} />
      ))}
      {[418, 621].map((y) => (
        <span key={y} className="absolute left-[13px] font-['DejaVu_Sans',sans-serif] text-[11px] leading-[12px] text-white whitespace-pre" style={{ top: y - 66 }}>{'='.repeat(21)}</span>
      ))}
      {CORR.map(([a, y, b, c, col]) => (
        <React.Fragment key={a}>
          <span className={`${font} ${col}`} style={{ left: 13, top: y - 68 }}>{a}</span>
          <span className={`${font} ${col}`} style={{ left: 94, top: y - 68 }}>{b}</span>
          <span className={`${font} ${col}`} style={{ left: 174, top: y - 68 }}>{c}</span>
        </React.Fragment>
      ))}
      <span className={`${font} text-white`} style={{ left: 13, top: 514 }}>Ratio 4/5 Symbol</span>
      <span className={`${font} text-white`} style={{ left: 169, top: 514 }}>74.72</span>

      <span className="absolute left-[1338px] top-[5px] text-[11.500px] tracking-[-0.3px] text-[#f0f0f0] whitespace-nowrap">Pro intraday  EA  English Magaza</span>
      <svg width="11" height="11" viewBox="0 0 11 11" className="absolute left-[1474px] top-[7px]"><circle cx="5.500" cy="5.500" r="5" fill="none" stroke="#ddd" /><path d="M3 6.500c1 2 4 2 5 0M3.500 4h1M6.500 4h1" stroke="#ddd" fill="none" /></svg>
      <span className="absolute left-[1272px] top-[13px] text-[18px] leading-[22px] text-[#e00000] tracking-[-0.8px] whitespace-nowrap">kemal yaman</span>
      <span className="absolute left-[1397px] top-[13px] text-[18px] leading-[22px] text-[#e00000] tracking-[-0.8px] whitespace-nowrap">4.10.2041</span>

      {AXIS.map(([t, y]) => (
        <span key={t} className="absolute left-[1495px] text-[11px] leading-[14px] tracking-[-0.7px] text-white" style={{ top: y - 67 }}>{t}</span>
      ))}
      {TAGS.map(([t, y, c]) => (
        <span key={t} className={`absolute left-[1492px] w-[40px] h-[14px] text-[11px] leading-[14px] tracking-[-0.7px] pl-[3px] ${c}`} style={{ top: y - 67 }}>{t}</span>
      ))}
      {TIMES.map(([t, x]) => (
        <span key={t} className="absolute top-[588px] text-[11px] leading-[14px] tracking-[-0.55px] text-white whitespace-nowrap" style={{ left: x - 382 }}>{t}</span>
      ))}
      <span className="absolute left-[18px] top-[3px] text-[11px] leading-[14px] tracking-[-0.2px] text-white">USDJPY,M30</span>
    </>
  );
}

function ChartTabs() {
  const right = ['DXY,M30', 'EURCAD,H1', 'NZDUSD,H1', 'AUDCHF,H1', 'EURGBP,H1', 'USDCHF,H1', 'OILUK,H1', 'OILUS,H1'];
  const cell = 'h-[17px] flex items-center px-[11.400px] border-r border-[#808080] text-[12px] tracking-[-0.7px] text-[#606060] whitespace-nowrap';
  return (
    <div className="h-[23px] bg-[#f0f0f0] flex items-center border-t border-[#d0d0d0] shrink-0">
      <div className="flex pl-[4px]">
        <div className={cell}>EURUSD,M30</div>
        <div className={cell}>GBPUSD,M30</div>
      </div>
      <div className="flex ml-auto">
        {right.map((t) => <div key={t} className={cell}>{t}</div>)}
      </div>
      <div className="w-[105px] pr-[7px] flex justify-end gap-[13px]">
        <svg width="6" height="9" viewBox="0 0 6 9"><path d="M6 0v9L0 4.500z" fill="#808080" /></svg>
        <svg width="6" height="9" viewBox="0 0 6 9"><path d="M0 0v9l6-4.500z" fill="#808080" /></svg>
      </div>
    </div>
  );
}

function Chart() {
  return (
    <div className="flex-1 flex flex-col h-[630px]">
      <div className="relative h-[607px] bg-black overflow-hidden font-['Liberation_Sans',sans-serif]">
        <ChartDrawing />
        <ChartTexts />
      </div>
      <ChartTabs />
    </div>
  );
}

const TypeIcon = ({ kind }) => {
  const s = {
    n: ['#cfe0f4', '#4a7ab8', '123', '#10408a'],
    d: ['#c4f0f4', '#50a8c0', '½', '#107090'],
    s: ['#f8ec98', '#b09830', 'ab', '#705800'],
  }[kind];
  if (kind === 'b') {
    return (
      <svg width="16" height="16" viewBox="0 0 16 16" className="shrink-0">
        <path d="M1 1h11l3 3v11H1z" fill="#9ae89a" stroke="#309a30" />
        <path d="M3 10l3-4 2 3 1 1h4" stroke="#0a5a0a" strokeWidth="1.300" fill="none" />
      </svg>
    );
  }
  return (
    <svg width="16" height="16" viewBox="0 0 16 16" className="shrink-0">
      <path d="M1 1h11l3 3v11H1z" fill={s[0]} stroke={s[1]} />
      <text x="8" y="11" textAnchor="middle" fontSize={kind === 'n' ? 7 : 9} fontWeight="700" fill={s[3]} fontFamily="Liberation Sans">{s[2]}</text>
    </svg>
  );
};

function Dialog() {
  const btn = 'h-[20px] bg-[#e1e1e1] border border-[#adadad] text-[12.500px] tracking-[-0.2px] text-[#111] flex items-center justify-center';
  return (
    <div className="absolute left-[582px] top-[46px] w-[605px] h-[645px] bg-[#f0f0f0] border border-[#0078d7] border-t-0 flex flex-col text-[12px] font-['Liberation_Sans',sans-serif] z-20">
      <div className="h-[31px] shrink-0 bg-[#0078d7] flex items-center text-white pl-[9px] -mx-px">
        <span className="text-[14px] tracking-[-0.25px]">Expert - Pro intraday EA English Magaza</span>
        <span className="ml-auto text-[14px] mr-[34px]">?</span>
        <svg width="13" height="13" viewBox="0 0 13 13" className="mr-[17px]"><path d="m1 1 11 11M12 1 1 12" stroke="#fff" strokeWidth="1.100" /></svg>
      </div>
      <div className="h-[28px] flex items-end pl-[9px] shrink-0 text-[13px] tracking-[-0.5px] text-[#222]">
        <div className="w-[56px] h-[20px] border border-b-0 border-[#e0e0e0] flex items-center justify-center">Hakkında</div>
        <div className="w-[41px] h-[20px] border border-l-0 border-b-0 border-[#e0e0e0] flex items-center justify-center">Genel</div>
        <div className="w-[47px] h-[22px] bg-white border border-b-0 border-[#e0e0e0] flex items-center justify-center pb-[4px]">Girdiler</div>
      </div>
      <div className="ml-[6px] w-[591px] h-[549px] bg-white border border-[#e4e4e4] shrink-0 flex pt-[9px] pl-[11px]">
        <div className="w-[457px] h-[530px] border-2 border-[#a0a0a0] border-b-2 bg-white shrink-0">
          <div className="h-[22px] flex items-center text-[13px] tracking-[-0.4px] text-[#222]">
            <div className="w-[226px] pl-[6px] h-full flex items-center border-r border-[#d8d8d8]">Değişken</div>
            <div className="pl-[7px]">Değer</div>
          </div>
          {INPUTS.map(([k, name, val], i) => (
            <div key={name} className={`h-[20px] flex items-center border-b border-[#c4c4c4] text-[13px] tracking-[-0.6px] text-[#222] whitespace-pre ${i % 2 ? 'bg-[#e9e9e9]' : 'bg-white'}`}>
              <div className="w-[226px] h-full flex items-center pl-[2px] border-r border-[#d0d0d0]">
                <TypeIcon kind={k} />
                <span className="ml-[3px]">{name}</span>
              </div>
              <div className="pl-[3px]">{val}</div>
            </div>
          ))}
        </div>
        <div className="ml-[8px] w-[102px] h-[530px] flex flex-col justify-end pb-[1px] gap-[13px]">
          <div className={btn}>Yükle</div>
          <div className={`${btn} h-[21px]`}>Kaydet</div>
        </div>
      </div>
      <div className="flex-1 relative flex justify-end items-start pt-[7px] pr-[10px] gap-[9px]">
        <div className={`${btn} w-[72px] !border-2 !border-[#0078d7]`}>Tamam</div>
        <div className={`${btn} w-[73px]`}>İptal</div>
        <div className={`${btn} w-[72px]`}>Sıfırla</div>
      </div>
    </div>
  );
}

const DocBall = ({ color, drop }) => (
  <svg width="14" height="16" viewBox="0 0 14 16" className="shrink-0">
    <path d="M1 1h7l3 3v11H1z" fill="#fff" stroke="#8a8a8a" />
    {drop ? <path d="M6 5v5M3.500 8 6 11l2.500-3" stroke="#d83020" strokeWidth="1.500" fill="none" /> : <circle cx="9" cy="12" r="3.500" fill={color} stroke="#fff" strokeWidth="0.500" />}
  </svg>
);

function Terminal() {
  const cols = 'grid grid-cols-[187px_261px_130px_101px_130px_145px_145px_145px_145px_145px_145px_220px]';
  const heads = ['Zaman', 'Tür', 'Miktar', 'Sembol', 'Fiyat', 'S / L', 'T / P', 'Fiyat', 'Komisyon', 'Swap'];
  return (
    <div className="h-[225px] flex bg-white shrink-0 font-['Liberation_Sans',sans-serif]">
      <div className="w-[16px] shrink-0 flex flex-col">
        <div className="h-[15px] bg-[#f0f0f0] text-[12px] font-bold leading-[14px] pl-[3px]">x</div>
        <div className="flex-1 bg-gradient-to-b from-[#d8e4f0] to-[#eaf2fa]" />
      </div>
      <div className="flex-1 text-[12.500px] tracking-[-0.65px] text-[#333]">
        <div className="h-[3px] bg-[#f0f0f0] border-b border-[#a0a0a0]" />
        <div className={`${cols} h-[25px] border-b border-[#c8c8c8] text-[13px] tracking-[-0.4px] text-[#222]`}>
          <div className="pl-[6px] flex items-center border-r border-[#e4e4e4]">Emir<span className="ml-[8px] text-[#888] text-[11px]">/</span></div>
          {heads.map((h, i) => (
            <div key={i} className="flex items-center justify-end pr-[5px] border-r border-[#e4e4e4]">{h}</div>
          ))}
          <div className="flex items-center justify-end pr-[5px]">Kar</div>
        </div>
        {TRADES.map((t, i) => {
          const sel = i === 7;
          return (
            <div key={t[0]} className={`${cols} h-[20px] border-b ${sel ? 'bg-[#0078d7] text-[#d4e8f8] border-[#0078d7]' : i % 2 ? 'bg-[#e9e9e9] border-[#c0c0c0]' : 'bg-white border-[#c0c0c0]'}`}>
              <div className={`flex items-center pl-[3px] gap-[5px] border-r ${sel ? 'border-[#60a8e0]' : 'border-[#d8d8d8]'}`}>
                <DocBall color={t[2] === 'buy' ? '#2a90e0' : '#e86020'} />
                {t[0]}
              </div>
              {t.slice(1, 11).map((v, j) => (
                <div key={j} className={`flex items-center justify-end pr-[3px] border-r ${sel ? 'border-[#60a8e0]' : 'border-[#d8d8d8]'}`}>{v}</div>
              ))}
              <div className="flex items-center justify-end pr-[4px]">
                <span>{t[11]}</span>
                <svg width="9" height="9" viewBox="0 0 9 9" className="ml-[9px]"><path d="m1.500 1.500 6 6M7.500 1.500l-6 6" stroke="#909090" strokeWidth="1.300" /></svg>
              </div>
            </div>
          );
        })}
        <div className="h-[20px] bg-[#c8c8c8] flex items-center pl-[3px] text-[13px] font-bold tracking-[-0.58px] text-[#222] relative whitespace-pre">
          <DocBall drop />
          <span className="ml-[4px]">Bakiye: 11 549.18 USD  Varlık: 11 547.06  Marjin: 754.20  Serbest marjin: 10 792.86  Marjin seviyesi: 1531.04%</span>
          <span className="ml-auto mr-[24px]">-2.12</span>
        </div>
      </div>
    </div>
  );
}

function Annotation() {
  return (
    <svg width="1920" height="915" className="absolute left-0 top-0 z-30 pointer-events-none">
      <rect x="351" y="857" width="630" height="22" fill="none" stroke="#d80010" strokeWidth="3.500" />
      <path d="M981 856 1516 356" stroke="#1ee01e" strokeWidth="2.500" />
      <path d="m1520.500 351.500-12.500 5 6.500 7z" fill="#1ee01e" />
    </svg>
  );
}

export default function App() {
  return (
    <div className="relative w-[1920px] h-[915px] overflow-hidden bg-[#f0f0f0] flex flex-col font-['Liberation_Sans',sans-serif]">
      <Toolbars />
      <div className="flex h-[630px] shrink-0">
        <LeftPanel />
        <Chart />
      </div>
      <Terminal />
      <OneClick />
      <DrawTools />
      <Dialog />
      <Annotation />
    </div>
  );
}
